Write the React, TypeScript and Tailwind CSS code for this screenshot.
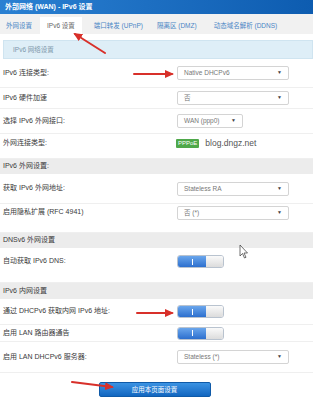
import React from "react";

const font = { fontFamily: '"Liberation Sans", "Noto Sans CJK SC", sans-serif' };

function Select({ value, width = "w-[112px]" }: { value: string; width?: string }) {
  return (
    <div
      className={`${width} h-[14px] flex items-center justify-between px-[6px] bg-white border border-[#d4d4d4] rounded-[2px] text-[6.5px] text-[#777]`}
    >
      <span>{value}</span>
      <span className="text-[5px] text-[#444]">▼</span>
    </div>
  );
}

function Toggle() {
  return (
    <div className="flex w-[47px] h-[13px] rounded-[3px] border border-[#b9c3cf] overflow-hidden">
      <div className="w-[28px] h-full flex items-center justify-center bg-gradient-to-b from-[#6aa6ec] to-[#2c6fce]">
        <div className="w-[1px] h-[6px] bg-white" />
      </div>
      <div className="flex-1 h-full bg-gradient-to-b from-[#fafafa] to-[#dcdcdc]" />
    </div>
  );
}

function Row({
  label,
  h,
  pb = "",
  children,
}: {
  label: string;
  h: string;
  pb?: string;
  children?: React.ReactNode;
}) {
  return (
    <div className={`flex items-center ${h} ${pb} border-b border-[#efefef]`}>
      <div className="w-[177px] pl-[3px] text-[7px] text-[#3a3a3a]">{label}</div>
      <div className="flex-1 flex items-center">{children}</div>
    </div>
  );
}

function Section({ label, h = "h-[15px]" }: { label: string; h?: string }) {
  return (
    <div className={`flex items-center ${h} bg-[#ececec] pl-[3px] text-[7px] text-[#3a3a3a]`}>
      {label}
    </div>
  );
}

export default function App() {
  return (
    <div className="relative w-[313px] h-[400px] overflow-hidden bg-white" style={font}>
      {/* title bar */}
      <div className="h-[14px] flex items-center pl-[5px] bg-gradient-to-r from-[#2a80d2] to-[#0d5cb0] text-white text-[7px] font-bold">
        外部网络 (WAN) - IPv6 设置
      </div>

      {/* tabs */}
      <div className="h-[20px] flex items-end bg-[#f1f1f1] text-[6.5px] text-[#4a86c5]">
        <div className="h-[17px] flex items-center pl-[6px] pr-[8px]">外网设置</div>
        <div className="h-[17px] flex items-center px-[7px] bg-white text-[#666]">IPv6 设置</div>
        <div className="h-[17px] flex items-center pl-[12px]">端口转发 (UPnP)</div>
        <div className="h-[17px] flex items-center pl-[14px]">隔离区 (DMZ)</div>
        <div className="h-[17px] flex items-center pl-[17px]">动态域名解析 (DDNS)</div>
      </div>

      <div className="pt-[6px]">
        <div className="ml-[3px] h-[19px] flex items-center pl-[9px] bg-[#deeef7] border border-[#cfe4f0] text-[6.5px] text-[#7d97aa]">
          IPv6 网络设置
        </div>

        <Row label="IPv6 连接类型:" h="h-[29px]">
          <Select value="Native DHCPv6" />
        </Row>
        <Row label="IPv6 硬件加速" h="h-[21px]">
          <Select value="否" />
        </Row>
        <Row label="选择 IPv6 外网接口:" h="h-[25px]">
          <Select value="WAN (ppp0)" width="w-[66px]" />
        </Row>
        <Row label="外网连接类型:" h="h-[25px]" pb="pb-[6px]">
          <span className="ml-[-1px] px-[2px] h-[9px] flex items-center rounded-[1px] bg-[#4fa84a] text-white text-[6px]">
            PPPoE
          </span>
          <span className="ml-[6px] text-[8.5px] text-[#555]">blog.dngz.net</span>
        </Row>

        <Section label="IPv6 外网设置:" />
        <Row label="获取 IPv6 外网地址:" h="h-[30px]">
          <Select value="Stateless RA" />
        </Row>
        <Row label="启用隐私扩展 (RFC 4941)" h="h-[29px]" pb="pb-[11px]">
          <Select value="否 (*)" />
        </Row>

        <Section label="DNSv6 外网设置" />
        <Row label="自动获取 IPv6 DNS:" h="h-[35px]" pb="pb-[7px]">
          <Toggle />
        </Row>

        <Section label="IPv6 内网设置" h="h-[16px]" />
        <Row label="通过 DHCPv6 获取内网 IPv6 地址:" h="h-[26px]">
          <Toggle />
        </Row>
        <Row label="启用 LAN 路由器通告" h="h-[17px]">
          <Toggle />
        </Row>
        <Row label="启用 LAN DHCPv6 服务器:" h="h-[31px]">
          <Select value="Stateless (*)" />
        </Row>

        <div className="flex justify-center pt-[9px] pr-[4px]">
          <button className="w-[112px] h-[15px] rounded-[2px] bg-gradient-to-b from-[#3b93e3] to-[#1166c0] border border-[#0f5aa8] text-white text-[6.5px]">
            应用本页面设置
          </button>
        </div>
      </div>

      {/* annotation arrows and cursor */}
      <svg className="absolute inset-0 pointer-events-none" width="313" height="400" viewBox="0 0 313 400">
        <defs>
          <marker id="head" markerWidth="9" markerHeight="8" refX="7" refY="4" orient="auto" markerUnits="userSpaceOnUse">
            <path d="M0 0 L9 4 L0 8 Z" fill="#d8302a" />
          </marker>
        </defs>
        <g stroke="#d8302a" strokeWidth="2" fill="none" strokeLinecap="round">
          <line x1="105" y1="53" x2="75" y2="34" markerEnd="url(#head)" />
          <line x1="134" y1="74" x2="172" y2="74" markerEnd="url(#head)" />
          <line x1="137" y1="313" x2="172" y2="313" markerEnd="url(#head)" />
          <line x1="72" y1="382" x2="112" y2="387" markerEnd="url(#head)" />
        </g>
        <path
          d="M240 245 L240 256 L242.5 253.5 L244.5 258 L246 257.3 L244 253 L247.5 253 Z"
          fill="white"
          stroke="#333"
          strokeWidth="0.7"
        />
      </svg>
    </div>
  );
}
